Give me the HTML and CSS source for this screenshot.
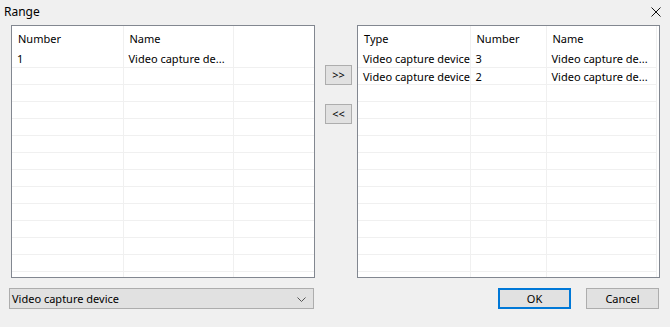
FILE: index.html
```html
<!DOCTYPE html>
<html>
<head>
<meta charset="utf-8">
<link rel="stylesheet" href="styles.css">
</head>
<body>
<div class="dialog">
  <div class="titlebar">
    <span class="title">Range</span>
    <svg class="close" width="10" height="10" viewBox="0 0 10 10"><path d="M0.5 0.5 L9.5 9.5 M9.5 0.5 L0.5 9.5" stroke="#111" stroke-width="1" fill="none"/></svg>
  </div>
  <div class="main">
    <div class="panel left">
      <table class="grid">
        <colgroup><col class="c111"><col class="c110"><col class="c81"></colgroup>
        <tr class="head"><td>Number</td><td>Name</td><td></td></tr>
        <tr><td>1</td><td>Video capture de...</td><td></td></tr>
        <tr><td></td><td></td><td></td></tr>
        <tr><td></td><td></td><td></td></tr>
        <tr><td></td><td></td><td></td></tr>
        <tr><td></td><td></td><td></td></tr>
        <tr><td></td><td></td><td></td></tr>
        <tr><td></td><td></td><td></td></tr>
        <tr><td></td><td></td><td></td></tr>
        <tr><td></td><td></td><td></td></tr>
        <tr><td></td><td></td><td></td></tr>
        <tr><td></td><td></td><td></td></tr>
        <tr><td></td><td></td><td></td></tr>
        <tr><td></td><td></td><td></td></tr>
        <tr><td></td><td></td><td></td></tr>
      </table>
    </div>
    <div class="mover">
      <button class="btn small">&gt;&gt;</button>
      <button class="btn small">&lt;&lt;</button>
    </div>
    <div class="panel right">
      <table class="grid r">
        <colgroup><col class="c112"><col class="c76"><col class="c110"></colgroup>
        <tr class="head"><td>Type</td><td>Number</td><td>Name</td></tr>
        <tr><td>Video capture device</td><td>3</td><td>Video capture de...</td></tr>
        <tr><td>Video capture device</td><td>2</td><td>Video capture de...</td></tr>
        <tr><td></td><td></td><td></td></tr>
        <tr><td></td><td></td><td></td></tr>
        <tr><td></td><td></td><td></td></tr>
        <tr><td></td><td></td><td></td></tr>
        <tr><td></td><td></td><td></td></tr>
        <tr><td></td><td></td><td></td></tr>
        <tr><td></td><td></td><td></td></tr>
        <tr><td></td><td></td><td></td></tr>
        <tr><td></td><td></td><td></td></tr>
        <tr><td></td><td></td><td></td></tr>
        <tr><td></td><td></td><td></td></tr>
        <tr><td></td><td></td><td></td></tr>
      </table>
    </div>
  </div>
  <div class="bottom">
    <div class="combo">
      <span>Video capture device</span>
      <svg class="chev" width="9" height="5" viewBox="0 0 9 5"><path d="M0.5 0.5 L4.5 4.5 L8.5 0.5" stroke="#555" stroke-width="1" fill="none"/></svg>
    </div>
    <div class="actions">
      <button class="btn wide default">OK</button>
      <button class="btn wide">Cancel</button>
    </div>
  </div>
</div>
</body>
</html>
```

FILE: styles.css
```css
* { box-sizing: border-box; }
html, body { margin: 0; padding: 0; }
body {
  width: 670px;
  height: 327px;
  background: #f0f0f0;
  font-family: "Noto Sans", "Open Sans", sans-serif;
  font-size: 11px;
  color: #000;
  overflow: hidden;
}
.dialog { width: 670px; height: 327px; display: flex; flex-direction: column; }
.titlebar {
  height: 25px;
  display: flex;
  align-items: center;
  justify-content: space-between;
  padding: 0 9px 0 4px;
}
.title { font-size: 12px; line-height: 14px; margin-top: -2px; }
.close { margin-top: -1px; }
.main { display: flex; padding-left: 11px; height: 253px; }
.panel {
  background: #fff;
  border: 1px solid #828790;
  height: 253px;
  overflow: hidden;
}
.left { width: 304px; }
.right { width: 303px; }
.mover {
  width: 42px;
  display: flex;
  flex-direction: column;
  align-items: flex-start;
  padding: 40px 0 0 10px;
  gap: 19px;
}
.grid { border-collapse: collapse; table-layout: fixed; width: 302px; }
.grid.r { width: 298px; }
.c111 { width: 111px; }
.c110 { width: 110px; }
.c81 { width: 81px; }
.c112 { width: 112px; }
.c76 { width: 76px; }
.grid td {
  height: 17px;
  padding: 1px 0 0 5px;
  border-right: 1px solid #f0f0f0;
  border-bottom: 1px solid #f0f0f0;
  white-space: nowrap;
  overflow: hidden;
  line-height: 15px;
}
.grid tr.head td { height: 24px; border-bottom: none; padding: 1px 0 0 6px; }
.left .grid td:last-child { border-right: none; }
.btn {
  font-family: inherit;
  font-size: 11px;
  color: #000;
  background: #e1e1e1;
  border: 1px solid #adadad;
  padding: 0;
  margin: 0;
}
.small { width: 27px; height: 20px; line-height: 16px; }
.bottom {
  display: flex;
  align-items: flex-start;
  justify-content: space-between;
  padding: 10px 11px 0 9px;
}
.combo {
  width: 305px;
  height: 21px;
  background: #e1e1e1;
  border: 1px solid #adadad;
  display: flex;
  align-items: center;
  justify-content: space-between;
  padding: 0 7px 0 2px;
}
.chev { margin-top: 1px; }
.actions { display: flex; gap: 15px; }
.wide { width: 73px; height: 21px; }
.default { border: 2px solid #0078d7; }
```
